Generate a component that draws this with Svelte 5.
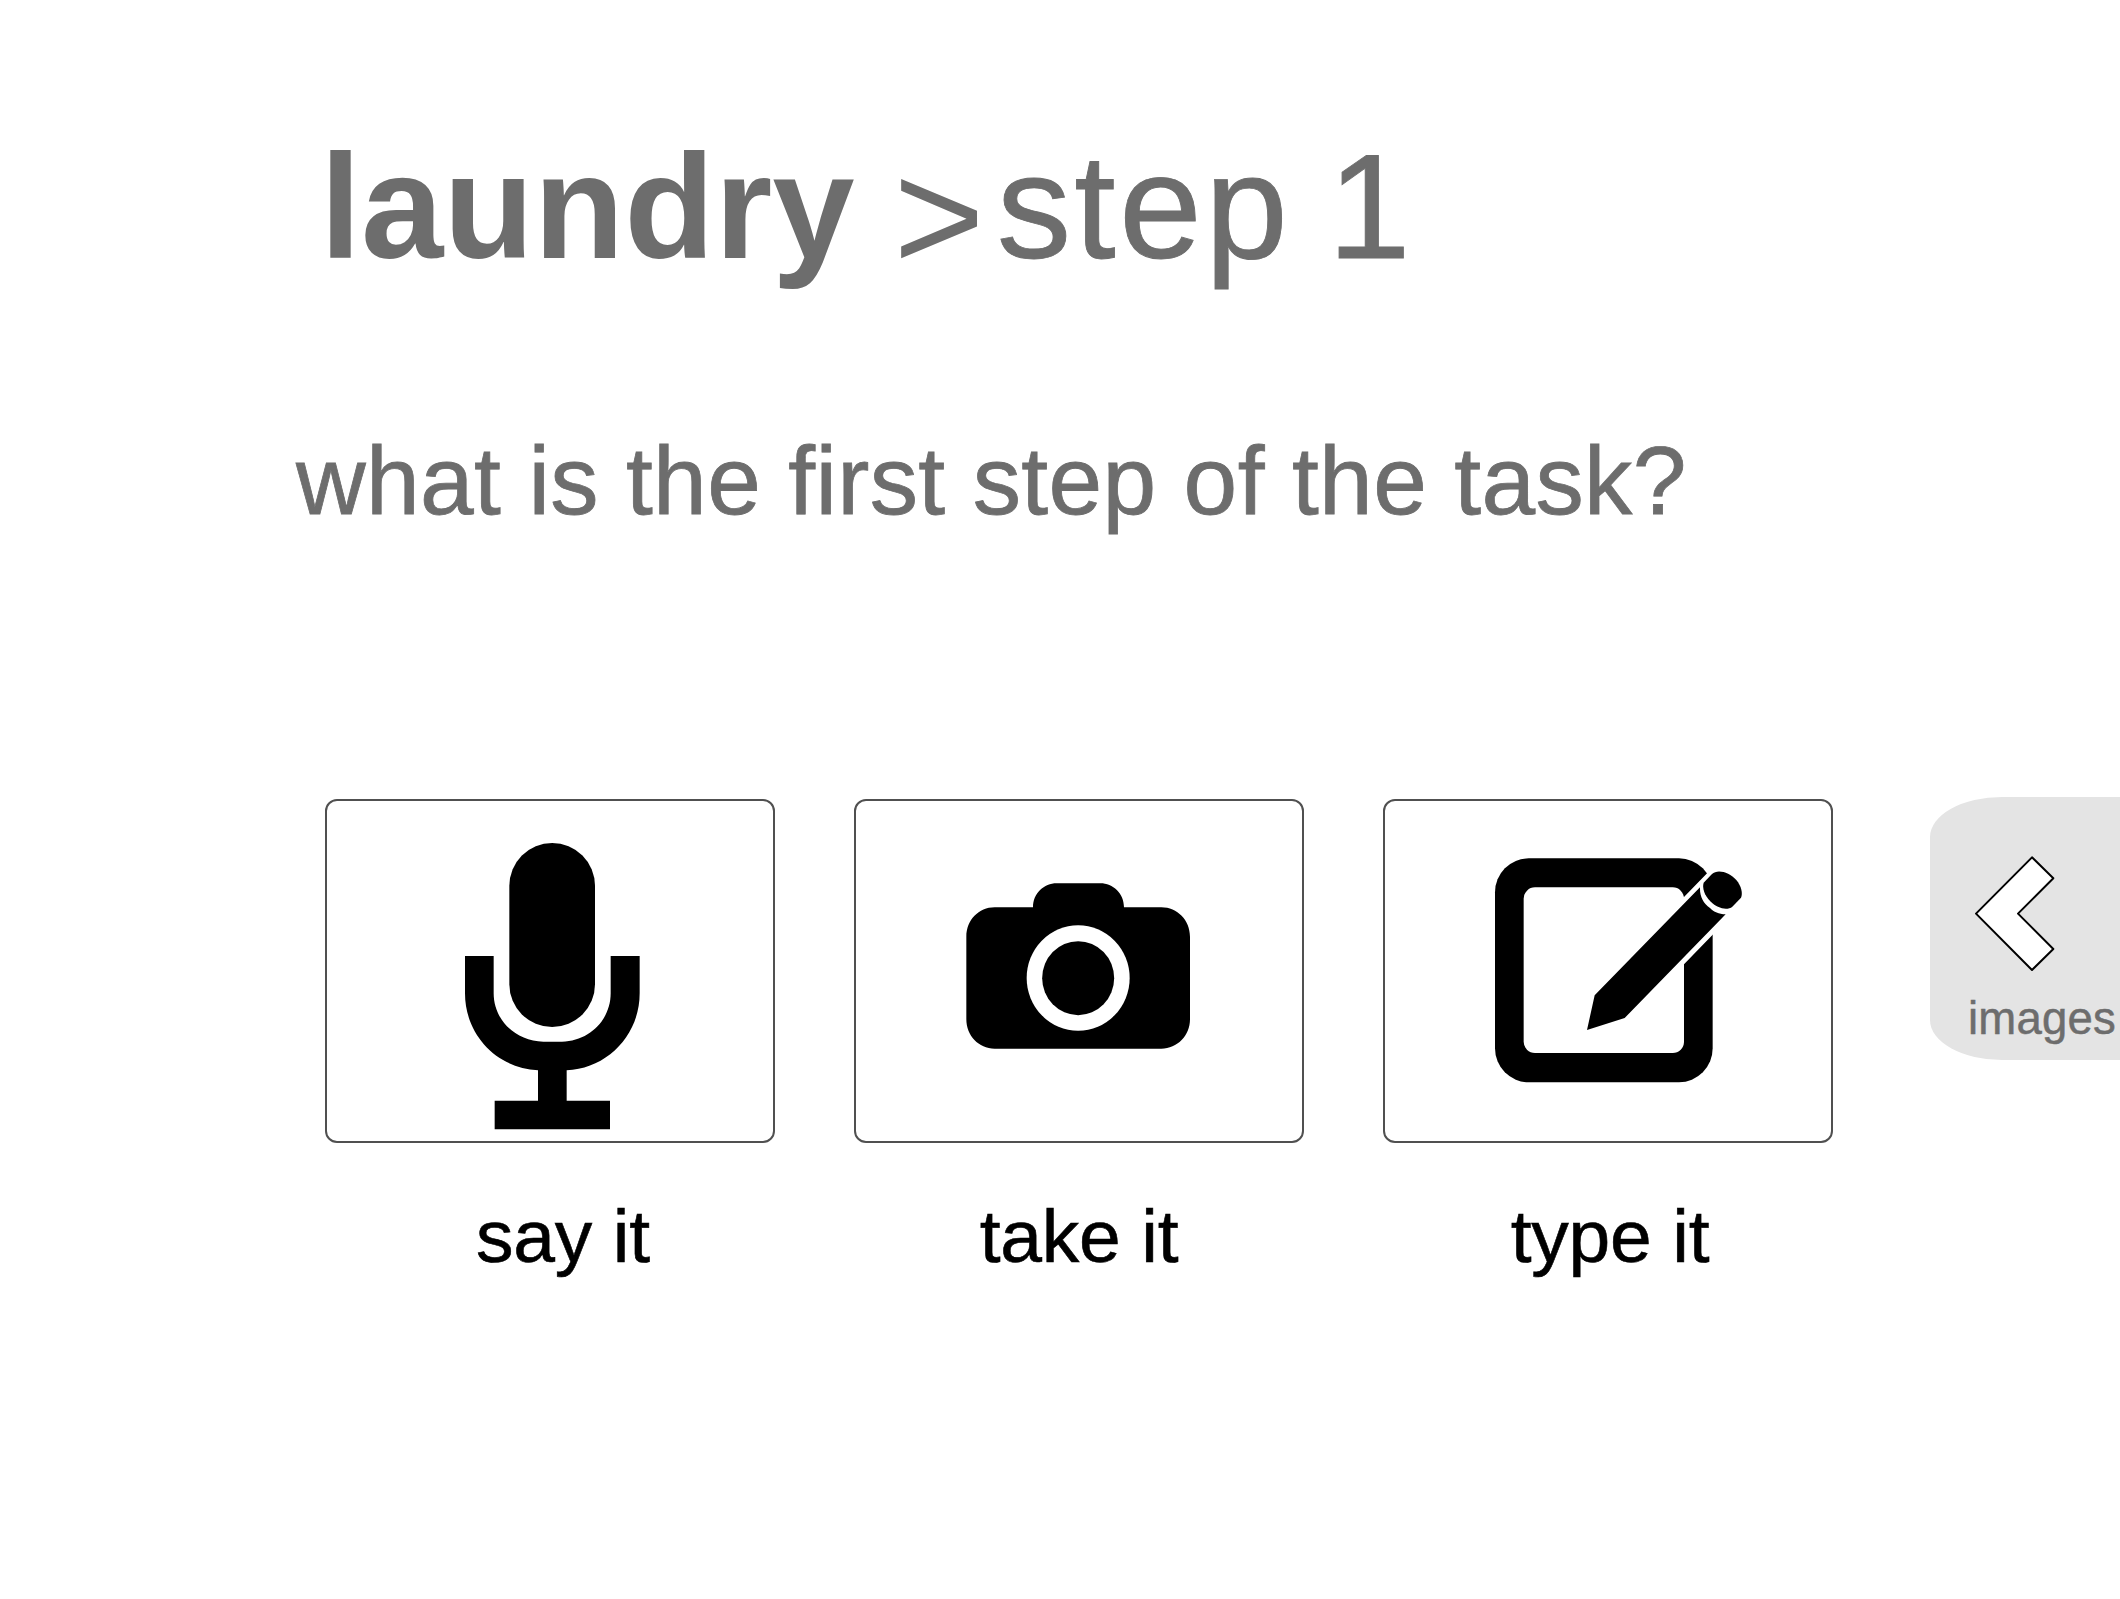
<script>
  const options = [
    { id: 'mic', label: 'say it' },
    { id: 'camera', label: 'take it' },
    { id: 'edit', label: 'type it' },
  ];
</script>

<main class="page">
  <h1 class="title">
    <span class="task">laundry</span>
    <span class="arrow">&gt;</span>
    <span class="step">step 1</span>
  </h1>

  <p class="question">what is the first step of the task?</p>

  <section class="row">
    {#each options as option (option.id)}
      <div class="option">
        <button class="card" aria-label={option.label}>
          {#if option.id === 'mic'}
            <svg viewBox="45 57 1350 1032">
              <rect x="598" y="189" width="257" height="552" rx="128.5" />
              <path d="M465 528H551V640C551 720 616 783 700 785H756C838 783 902 720 902 640V528H989V640C989 766 891 866 770 871V962H900V1048H554V962H684V871C562 865 465 766 465 640Z" />
            </svg>
          {:else if option.id === 'camera'}
            <svg viewBox="42 57 1350 1032">
              <path d="M579 382C579 340 612 310 650 310H781C819 310 852 340 852 382H964C1012 382 1050 421 1050 470V718C1050 767 1012 806 964 806H464C416 806 379 767 379 718V470C379 421 416 382 464 382Z" />
              <ellipse class="blank" cx="714.5" cy="594" rx="154.5" ry="158.5" />
              <ellipse cx="714.5" cy="594.5" rx="108" ry="111" />
            </svg>
          {:else}
            <svg viewBox="39 57 1350 1032">
              <rect x="375" y="235" width="653" height="672" rx="101" ry="102" />
              <rect class="blank" x="461" y="322" width="481" height="497" rx="34" />
              <path class="blank" d="M660 641L1009 282L1040 250L1140 350L1028 464L764 736Z" />
              <path d="M651 750L674 646L990 322C989 350 1000 370 1020 384C1032 396 1046 402 1067 403L764 714Z" />
              <path d="M1001 308L1026 282C1042 266 1078 276 1099 300C1114 318 1119 340 1113 353L1087 380C1072 392 1042 386 1021 364C1003 345 996 324 1001 308Z" />
            </svg>
          {/if}
        </button>
        <span class="label {option.id}">{option.label}</span>
      </div>
    {/each}

    <button class="drawer">
      <svg class="chevron" viewBox="222 226 246 352">
        <path d="M396 233L460 296L354 402L460 508L396 571L228 402Z" />
      </svg>
      <span class="drawer-label">images</span>
    </button>
  </section>
</main>

<style>
  :global(body) {
    background: #fff;
  }

  .page {
    box-sizing: border-box;
    width: 2120px;
    height: 1599px;
    padding-top: 124px;
    overflow: hidden;
    font-family: 'Liberation Sans', Arial, sans-serif;
    color: #6d6d6d;
  }

  .title {
    display: flex;
    align-items: baseline;
    height: 160px;
    margin: 0 0 0 320px;
    font-size: 148px;
    line-height: 160px;
    font-weight: 400;
    white-space: nowrap;
  }

  .task {
    font-weight: 700;
  }

  .arrow {
    position: relative;
    top: 12px;
    margin: 0 12px 0 39px;
    font-size: 156px;
  }

  .step {
    letter-spacing: 3.2px;
    word-spacing: -8px;
    font-size: 149px;
    -webkit-text-stroke: 0.9px currentColor;
  }

  .question {
    margin: 142px 0 0 296px;
    font-size: 96.5px;
    line-height: 110px;
    letter-spacing: 0.35px;
    white-space: nowrap;
    -webkit-text-stroke: 0.8px currentColor;
  }

  .row {
    display: flex;
    align-items: flex-start;
    margin: 263px 0 0 325px;
  }

  .option {
    display: flex;
    flex-direction: column;
    align-items: center;
    flex: none;
    width: 450px;
    margin-right: 79px;
  }

  .card {
    box-sizing: border-box;
    width: 450px;
    height: 344px;
    padding: 0;
    border: 2px solid #505050;
    border-radius: 12px;
    background: #fff;
  }

  .card svg {
    display: block;
    width: 450px;
    height: 344px;
    margin: -2px;
    fill: #000;
  }

  .card .blank {
    fill: #fff;
  }

  .label {
    margin-top: 48px;
    font-size: 75px;
    line-height: 90px;
    letter-spacing: -0.2px;
    color: #000;
    white-space: nowrap;
    -webkit-text-stroke: 0.6px currentColor;
  }

  .label.mic {
    padding-left: 26px;
  }

  .label.edit {
    padding-left: 4px;
  }

  .drawer {
    display: flex;
    flex-direction: column;
    align-items: flex-start;
    flex: none;
    box-sizing: border-box;
    width: 190px;
    height: 263px;
    margin: -2px 0 0 18px;
    padding: 58.3px 0 0 37px;
    border: 0;
    border-radius: 72px 0 0 72px / 40px 0 0 40px;
    background: #e4e4e4;
    font-family: inherit;
    color: #6d6d6d;
  }

  .chevron {
    width: 82px;
    height: 117.3px;
    margin-left: 7px;
    fill: #fff;
    stroke: #000;
    stroke-width: 6;
    stroke-linejoin: round;
  }

  .drawer-label {
    margin: 21px 0 0 1px;
    font-size: 45.5px;
    line-height: 50px;
    letter-spacing: 0.2px;
    white-space: nowrap;
    -webkit-text-stroke: 0.5px currentColor;
  }
</style>
